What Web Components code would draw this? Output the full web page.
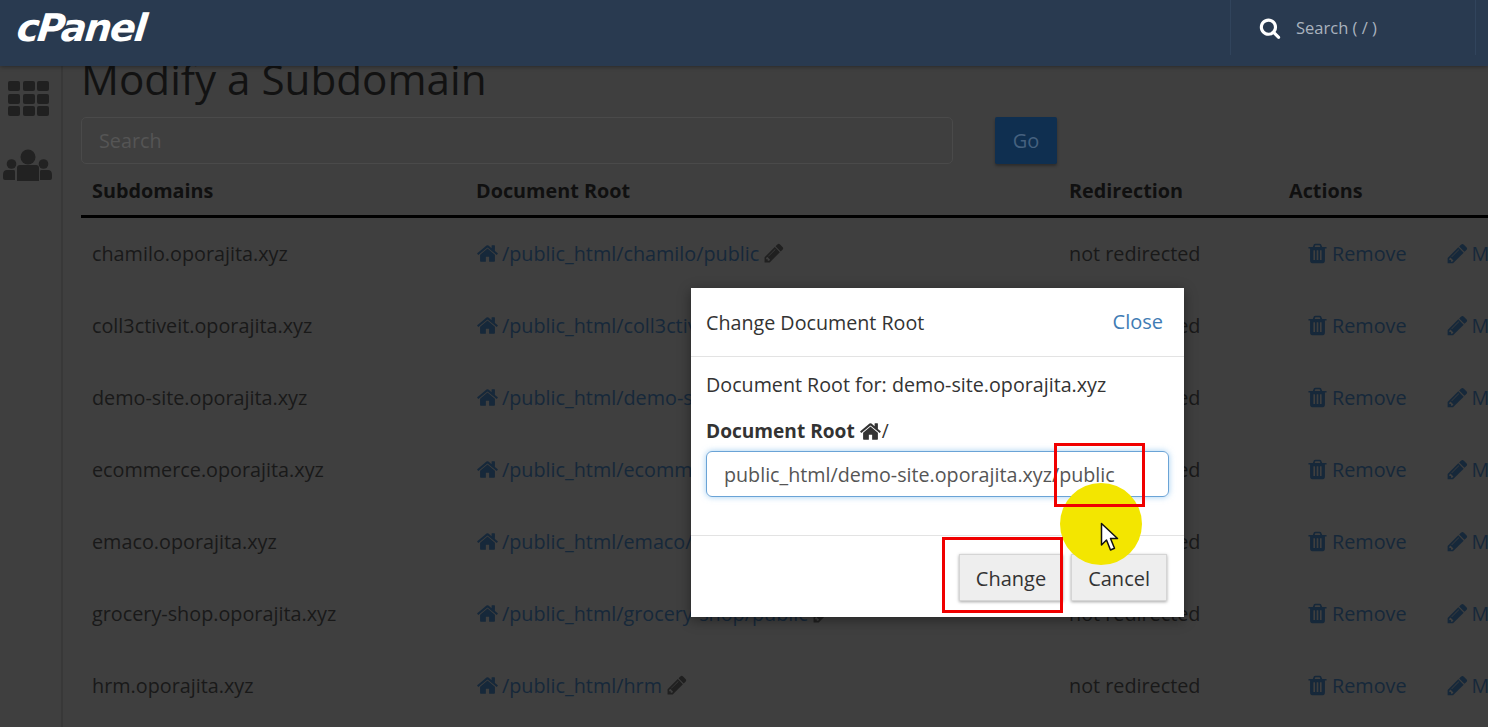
<!DOCTYPE html>
<html>
<head>
<meta charset="utf-8">
<title>Modify a Subdomain</title>
<style>
  html, body { margin: 0; height: 100%; overflow: hidden; background: #3f3f3f; }
  body { font-family: "Open Sans", "Liberation Sans", sans-serif; color: #1d1d1d; }
</style>
</head>
<body>
<cp-header></cp-header>
<cp-layout>
  <cp-sidebar slot="side"></cp-sidebar>
  <cp-subdomains></cp-subdomains>
</cp-layout>
<cp-modal>
  <span slot="title">Change Document Root</span>
  <span slot="close">Close</span>
  <cp-docroot-form></cp-docroot-form>
  <cp-button slot="footer">Change</cp-button>
  <cp-button slot="footer">Cancel</cp-button>
</cp-modal>
<cp-highlight style="--x:1054px;--y:443px;--w:91px;--h:64px"></cp-highlight>
<cp-highlight style="--x:942px;--y:537px;--w:121px;--h:76px"></cp-highlight>
<cp-pointer></cp-pointer>

<script>
const ICONS = {
  home: 'M1472 992v480q0 26-19 45t-45 19h-384v-384h-256v384h-384q-26 0-45-19t-19-45v-480q0-1 .5-3t.5-3l575-474 575 474q1 2 1 6zm223-69l-62 74q-8 9-21 11h-3q-13 0-21-7l-692-577-692 577q-12 8-24 7-13-2-21-11l-62-74q-8-10-7-23.5t11-21.5l719-599q32-26 76-26t76 26l244 204v-195q0-14 9-23t23-9h192q14 0 23 9t9 23v408l219 182q10 8 11 21.5t-7 23.5z',
  pencil: 'M491 1536l91-91-235-235-91 91v107h128v128h107zm523-928q0-22-22-22-10 0-17 7l-542 542q-7 7-7 17 0 22 22 22 10 0 17-7l542-542q7-7 7-17zm-54-192l416 416-832 832h-416v-416zm683 96q0 53-37 90l-166 166-416-416 166-165q36-38 90-38 53 0 91 38l235 234q37 39 37 91z',
  trash: 'M704 1376v-704q0-14-9-23t-23-9h-64q-14 0-23 9t-9 23v704q0 14 9 23t23 9h64q14 0 23-9t9-23zm256 0v-704q0-14-9-23t-23-9h-64q-14 0-23 9t-9 23v704q0 14 9 23t23 9h64q14 0 23-9t9-23zm256 0v-704q0-14-9-23t-23-9h-64q-14 0-23 9t-9 23v704q0 14 9 23t23 9h64q14 0 23-9t9-23zm-544-992h448l-48-117q-7-9-17-11h-317q-10 2-17 11zm928 32v64q0 14-9 23t-23 9h-96v948q0 83-47 143.5t-113 60.5h-832q-66 0-113-58.5t-47-141.5v-952h-96q-14 0-23-9t-9-23v-64q0-14 9-23t23-9h309l70-167q15-37 54-63t79-26h320q40 0 79 26t54 63l70 167h309q14 0 23 9t9 23z',
  search: 'M1216 832q0-185-131.5-316.5t-316.5-131.5-316.5 131.5-131.5 316.5 131.5 316.5 316.5 131.5 316.5-131.5 131.5-316.5zm512 832q0 52-38 90t-90 38q-54 0-90-38l-343-342q-179 124-399 124-143 0-273.5-55.5t-225-150-150-225-55.5-273.5 55.5-273.5 150-225 225-150 273.5-55.5 273.5 55.5 225 150 150 225 55.5 273.5q0 220-124 399l343 343q37 37 37 90z'
};
const icon = (name, size) => `<svg width="${size}" height="${size}" viewBox="0 0 1792 1792" fill="currentColor"><path d="${ICONS[name]}"/></svg>`;

class CpHeader extends HTMLElement {
  connectedCallback() {
    this.attachShadow({ mode: 'open' }).innerHTML = `
      <style>
        :host { display: flex; position: relative; z-index: 2; height: 66px; background: #293a50; box-shadow: 0 1px 4px rgba(0,0,0,.35); color: #fff; }
        .logo { font: italic bold 38px "DejaVu Sans", sans-serif; letter-spacing: -1.8px; line-height: 56px; padding-left: 13px; transform: skewX(-6deg); transform-origin: 0 100%; flex: 1; }
        .search { display: flex; align-items: center; width: 246px; height: 55px; padding-left: 28px; box-sizing: border-box; margin-right: 12px; border-left: 1px solid #31445c; border-right: 1px solid #31445c; color: #a9b3bf; font-size: 16.5px; gap: 15px; }
        .search svg { color: #fff; }
      </style>
      <div class="logo">cPanel</div>
      <div class="search">${icon('search', 22)}<span>Search ( / )</span></div>`;
  }
}

class CpLayout extends HTMLElement {
  connectedCallback() {
    this.attachShadow({ mode: 'open' }).innerHTML = `
      <style>
        :host { display: flex; height: 661px; }
        .side { flex: none; width: 61px; border-right: 2px solid #383838; }
        .main { flex: 1; min-width: 0; padding-left: 18px; }
      </style>
      <div class="side"><slot name="side"></slot></div>
      <div class="main"><slot></slot></div>`;
  }
}

class CpSidebar extends HTMLElement {
  connectedCallback() {
    const cells = Array(9).fill('<i></i>').join('');
    this.attachShadow({ mode: 'open' }).innerHTML = `
      <style>
        :host { display: block; padding-top: 15px; }
        .grid { display: grid; grid-template-columns: repeat(3, 12px); grid-auto-rows: 10px; gap: 2.5px; margin-left: 8px; }
        .grid i { background: #202020; border-radius: 2px; }
        svg { display: block; margin: 33px 0 0 3px; color: #222; }
      </style>
      <div class="grid">${cells}</div>
      <svg width="49" height="33" viewBox="0 0 49 33" fill="currentColor">
        <circle cx="25" cy="8" r="7.5"/><circle cx="8.5" cy="15" r="4.8"/><circle cx="40.5" cy="15" r="4.8"/>
        <path d="M14 19q0-3 3-3h16q3 0 3 3v13H14z"/>
        <path d="M0 26q0-5 4-5h7q1 0 1 2v8H2q-2 0-2-2zM49 26q0-5-4-5h-7q-1 0-1 2v8h10q2 0 2-2z"/>
      </svg>`;
  }
}

const ROWS = [
  ['chamilo.oporajita.xyz', '/public_html/chamilo/public'],
  ['coll3ctiveit.oporajita.xyz', '/public_html/coll3ctiveit/public'],
  ['demo-site.oporajita.xyz', '/public_html/demo-site.oporajita.xyz/public'],
  ['ecommerce.oporajita.xyz', '/public_html/ecommerce/public'],
  ['emaco.oporajita.xyz', '/public_html/emaco/public'],
  ['grocery-shop.oporajita.xyz', '/public_html/grocery-shop/public'],
  ['hrm.oporajita.xyz', '/public_html/hrm']
];

class CpSubdomains extends HTMLElement {
  connectedCallback() {
    const rows = ROWS.map(([name, root]) => `
      <div class="row">
        <span>${name}</span>
        <span class="link root">${icon('home', 23)}<span>${root}</span><span class="edit">${icon('pencil', 22)}</span></span>
        <span>not redirected</span>
        <span class="link actions">
          <span class="act rm">${icon('trash', 23)}Remove</span>
          <span class="act">${icon('pencil', 23)}Manage</span>
        </span>
      </div>`).join('');
    this.attachShadow({ mode: 'open' }).innerHTML = `
      <style>
        :host { display: block; font-size: 19.8px; }
        h1 { margin: 0; height: 51px; line-height: 26px; font-size: 42.2px; font-weight: 400; color: #121212; white-space: nowrap; }
        .search { display: flex; gap: 42px; }
        .input { width: 872px; height: 47px; box-sizing: border-box; border: 1px solid #4a4a4a; border-radius: 5px; padding-left: 17px; line-height: 46px; color: #555; }
        .go { width: 62px; height: 47px; line-height: 47px; text-align: center; background: #0f2f50; border-radius: 2px; color: #45617f; font-size: 20px; box-shadow: 0 2px 3px rgba(0,0,0,.3); }
        .row { display: grid; grid-template-columns: 384px 593px 220px 1fr; box-sizing: border-box; padding: 0 0 2px 11px; height: 72px; align-items: center; white-space: nowrap; overflow: hidden; }
        .head { align-items: end; padding-bottom: 11px; font-weight: 700; border-bottom: 3px solid #000; color: #101010; height: 54px; }
        .body .row { color: #191919; }
        .link { color: #16283a; display: flex; align-items: center; }
        .root > span:first-of-type { margin-left: 3px; }
        .edit { color: #202020; margin-left: 4px; display: flex; }
        .actions { padding-left: 17px; }
        .act { display: inline-flex; align-items: center; gap: 3px; }
        .rm { margin-right: 39px; }
      </style>
      <h1>Modify a Subdomain</h1>
      <div class="search"><div class="input">Search</div><div class="go">Go</div></div>
      <div class="row head"><span>Subdomains</span><span>Document Root</span><span>Redirection</span><span>Actions</span></div>
      <div class="body">${rows}</div>`;
  }
}

class CpModal extends HTMLElement {
  connectedCallback() {
    this.attachShadow({ mode: 'open' }).innerHTML = `
      <style>
        :host { display: block; position: absolute; left: 691px; top: 288px; width: 493px; height: 329px; background: #fff; color: #333; font-size: 19.7px; box-shadow: 0 3px 12px rgba(0,0,0,.4); z-index: 3; }
        .top { display: flex; justify-content: space-between; align-items: center; height: 68px; padding: 0 21px 0 15px; border-bottom: 1px solid #e3e3e3; }
        .top slot[name=close] { color: #3f7cb4; display: block; font-size: 20px; padding-bottom: 2px; }
        .foot { display: flex; justify-content: flex-end; gap: 8px; height: 81px; box-sizing: border-box; padding: 18px 17px 0 0; border-top: 1px solid #e3e3e3; }
        .mid { height: 178px; padding: 0 15px; box-sizing: border-box; }
      </style>
      <div class="top"><span><slot name="title"></slot></span><slot name="close"></slot></div>
      <div class="mid"><slot></slot></div>
      <div class="foot"><slot name="footer"></slot></div>`;
  }
}

class CpDocrootForm extends HTMLElement {
  connectedCallback() {
    this.attachShadow({ mode: 'open' }).innerHTML = `
      <style>
        :host { display: block; color: #333; }
        p { margin: 0; padding-top: 15px; height: 41px; line-height: 26px; white-space: nowrap; }
        label { display: flex; align-items: center; font-weight: 700; font-size: 19.1px; height: 36px; white-space: nowrap; }
        label svg { margin: 0 0 0 4px; }
        label span { font-weight: 400; }
        .field { margin-top: 2px; width: 463px; height: 46px; box-sizing: border-box; border: 1.5px solid #6aa3d6; border-radius: 6px; box-shadow: 0 0 6px rgba(102,175,233,.6); padding-left: 17px; line-height: 45px; color: #555; white-space: nowrap; }
      </style>
      <p>Document Root for: demo-site.oporajita.xyz</p>
      <label>Document Root ${icon('home', 23)}<span>/</span></label>
      <div class="field">public_html/demo-site.oporajita.xyz/public</div>`;
  }
}

class CpButton extends HTMLElement {
  connectedCallback() {
    this.attachShadow({ mode: 'open' }).innerHTML = `
      <style>
        :host { display: block; height: 47px; box-sizing: border-box; padding: 0 16px; line-height: 47px; background: #eeeeee; border: 1px solid #d5d5d5; color: #333; font-size: 20px; box-shadow: 0 1px 3px rgba(0,0,0,.35); }
      </style>
      <slot></slot>`;
  }
}

class CpHighlight extends HTMLElement {
  connectedCallback() {
    this.attachShadow({ mode: 'open' }).innerHTML = `
      <style>
        :host { display: block; position: absolute; left: var(--x); top: var(--y); width: var(--w); height: var(--h); box-sizing: border-box; border: 3px solid #f00000; z-index: 6; }
      </style>`;
  }
}

class CpPointer extends HTMLElement {
  connectedCallback() {
    this.attachShadow({ mode: 'open' }).innerHTML = `
      <style>
        :host { display: block; position: absolute; left: 1060px; top: 483px; width: 82px; height: 82px; border-radius: 50%; background: #f3e600; z-index: 5; }
        svg { position: absolute; left: 40px; top: 39px; }
      </style>
      <svg width="20" height="30" viewBox="0 0 20 30"><path d="M1.5 1.5V23l5-5 4 10 4-1.8-4-9.7h7z" fill="#fff" stroke="#111" stroke-width="1.5" stroke-linejoin="round"/></svg>`;
  }
}

customElements.define('cp-header', CpHeader);
customElements.define('cp-layout', CpLayout);
customElements.define('cp-sidebar', CpSidebar);
customElements.define('cp-subdomains', CpSubdomains);
customElements.define('cp-modal', CpModal);
customElements.define('cp-docroot-form', CpDocrootForm);
customElements.define('cp-button', CpButton);
customElements.define('cp-highlight', CpHighlight);
customElements.define('cp-pointer', CpPointer);
</script>
</body>
</html>
